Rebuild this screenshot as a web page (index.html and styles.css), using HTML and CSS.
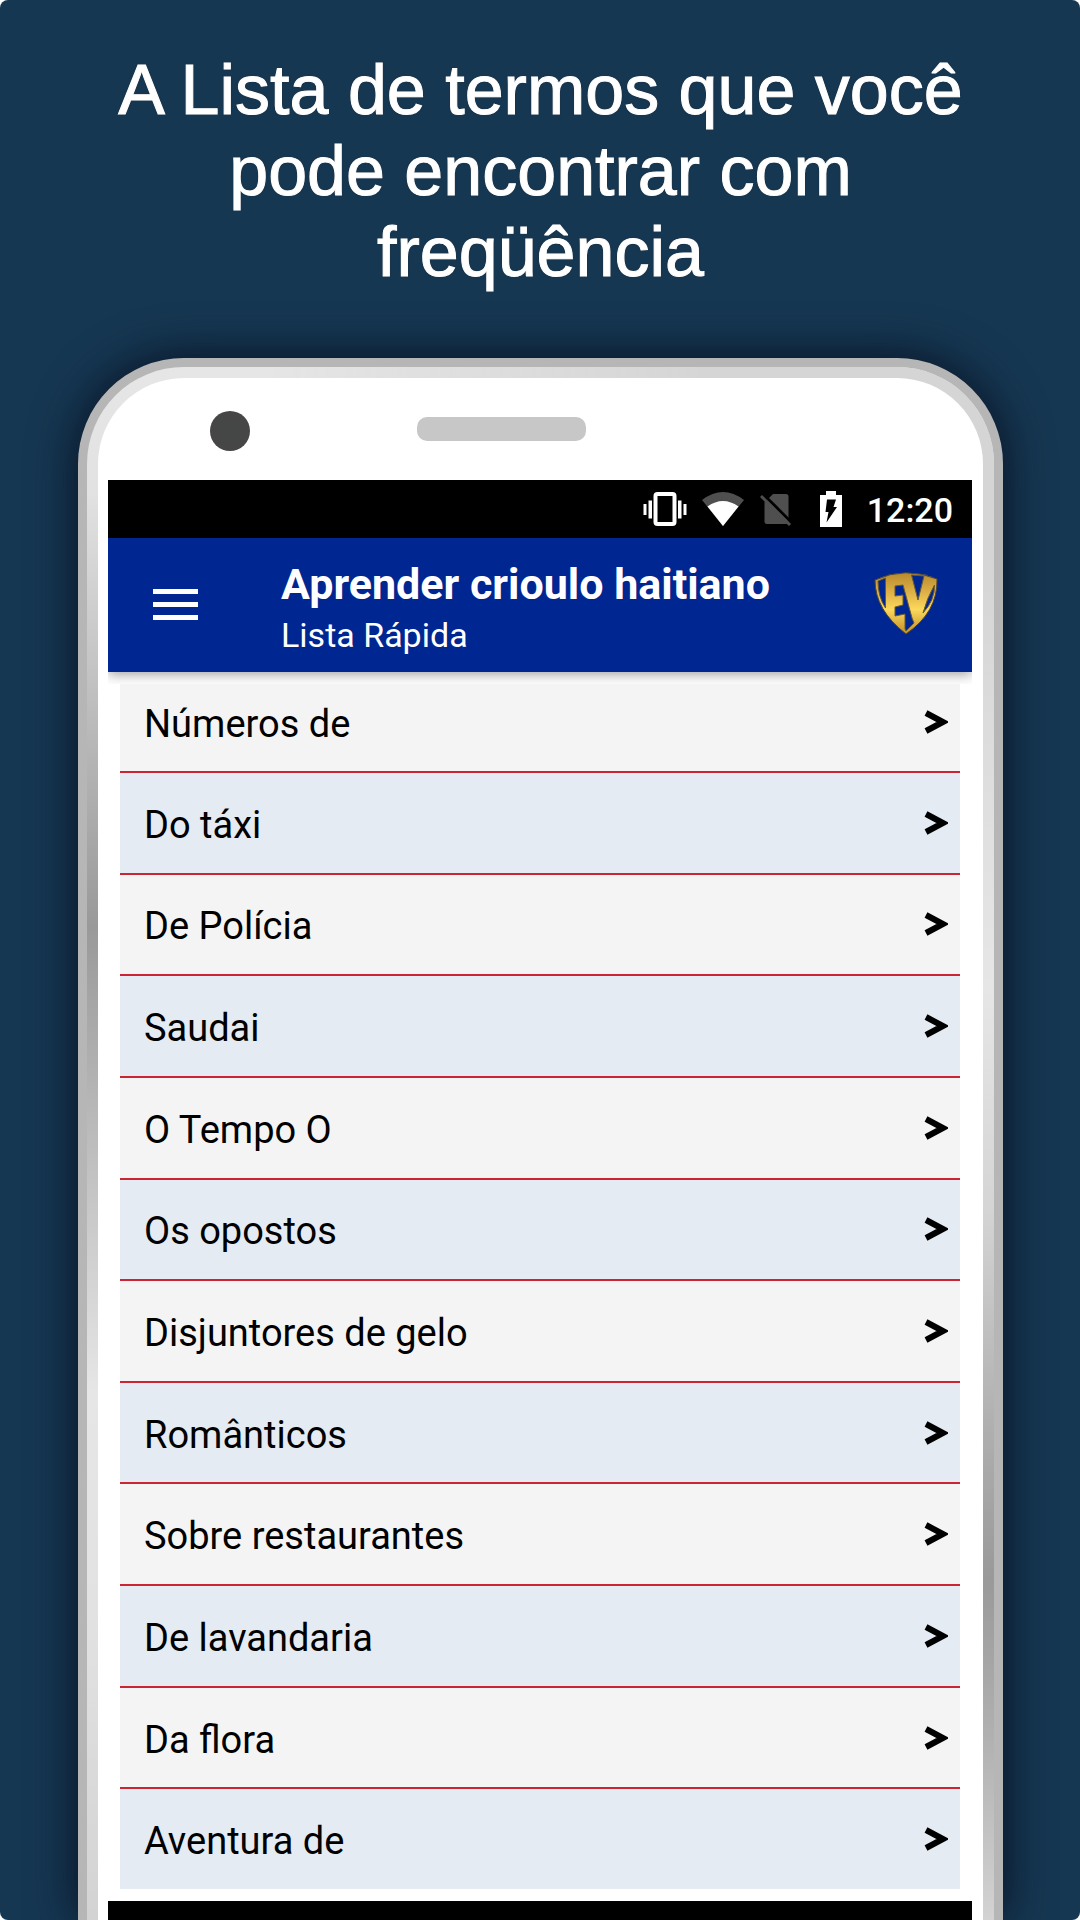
FILE: index.html
```html
<!doctype html>
<html lang="pt">
<head>
  <title>Aprender crioulo haitiano</title>
  <meta charset="UTF-8">
  <meta name="viewport" content="width=device-width, initial-scale=1">
  <link rel="stylesheet" href="styles.css">
</head>
<body>
  <div class="promo">
    <h1>A Lista de termos que você pode encontrar com freqüência</h1>
    <div class="phone">
      <div class="bezel">
        <div class="sensors">
          <span class="camera"></span>
          <span class="speaker"></span>
        </div>
        <div class="screen">
          <div class="status-bar">
            <svg class="vibrate" viewBox="0 0 44 34" width="44" height="34" fill="#fff">
              <rect x="12.5" y="2" width="19" height="30" rx="2" fill="none" stroke="#fff" stroke-width="4"/>
              <path d="M0.5 12h3v11h-3zM5.5 8.5h3.5v18h-3.5zM35 8.5h3.5v18h-3.5zM40.5 12h3v11h-3z"/>
            </svg>
            <svg class="wifi" viewBox="0 0 42 34" width="42" height="34">
              <path d="M0 8Q21-8 42 8L21 34Z" fill="#4f4f4f"/>
              <path d="M5.5 14.5Q21 3.5 36.5 14.5L21 34Z" fill="#fff"/>
            </svg>
            <svg class="no-sim" viewBox="0 0 32 34" width="32" height="34">
              <path d="M13 2h13q2.500 0 2.500 2.500v25q0 2.500-2.500 2.500h-19q-2.500 0-2.500-2.500V10.500z" fill="#4f4f4f"/>
              <path d="M3 2L32 31" stroke="#000" stroke-width="3"/>
              <path d="M1 4L30 33" stroke="#4f4f4f" stroke-width="3"/>
            </svg>
            <svg class="battery" viewBox="0 0 24 36" width="24" height="36">
              <path d="M7 0h10v4h6v32H1V4h6z" fill="#fff"/>
              <path d="M8 8.500h9L14.500 16h3.500L7.500 31.500l2-10.500H6.500z" fill="#000"/>
            </svg>
            <span class="time">12:20</span>
          </div>
          <header class="app-bar">
            <button type="button" class="menu-btn" aria-label="Menu">
              <span></span><span></span><span></span>
            </button>
            <div class="titles">
              <h2>Aprender crioulo haitiano</h2>
              <p>Lista Rápida</p>
            </div>
            <svg class="logo" viewBox="0 0 64 64" width="64" height="64">
              <defs>
                <linearGradient id="gold" x1="0" y1="0" x2="0" y2="1">
                  <stop offset="0" stop-color="#b78a2e"/>
                  <stop offset="0.3" stop-color="#dcae45"/>
                  <stop offset="0.6" stop-color="#fbd95c"/>
                  <stop offset="1" stop-color="#c08d28"/>
                </linearGradient>
              </defs>
              <path d="M1 8Q31-6 63 7Q64 40 32 62Q1 38 1 8Z" fill="url(#gold)" stroke="#4f4636" stroke-width="1"/>
              <g fill="#002692" stroke="#6b5a30" stroke-width="1">
                <path d="M4 9L11.500 6V36Q4 25 4 9Z"/>
                <path d="M21 14L29 13L38 46L40 51L32 59L31 57V42L21 44V35L29 33V23L21 24Z"/>
                <path d="M37.500 3L50 4L44 28Z"/>
                <path d="M60.500 13Q61 28 49 41Q53 26 60.500 13Z"/>
              </g>
            </svg>
          </header>
          <ul class="terms">
            <li><a href="#numeros">Números de<svg viewBox="0 0 24 24" width="24" height="24"><path d="M2 3L19 12L2 21"/></svg></a></li>
            <li><a href="#taxi">Do táxi<svg viewBox="0 0 24 24" width="24" height="24"><path d="M2 3L19 12L2 21"/></svg></a></li>
            <li><a href="#policia">De Polícia<svg viewBox="0 0 24 24" width="24" height="24"><path d="M2 3L19 12L2 21"/></svg></a></li>
            <li><a href="#saudai">Saudai<svg viewBox="0 0 24 24" width="24" height="24"><path d="M2 3L19 12L2 21"/></svg></a></li>
            <li><a href="#tempo">O Tempo O<svg viewBox="0 0 24 24" width="24" height="24"><path d="M2 3L19 12L2 21"/></svg></a></li>
            <li><a href="#opostos">Os opostos<svg viewBox="0 0 24 24" width="24" height="24"><path d="M2 3L19 12L2 21"/></svg></a></li>
            <li><a href="#disjuntores">Disjuntores de gelo<svg viewBox="0 0 24 24" width="24" height="24"><path d="M2 3L19 12L2 21"/></svg></a></li>
            <li><a href="#romanticos">Românticos<svg viewBox="0 0 24 24" width="24" height="24"><path d="M2 3L19 12L2 21"/></svg></a></li>
            <li><a href="#restaurantes">Sobre restaurantes<svg viewBox="0 0 24 24" width="24" height="24"><path d="M2 3L19 12L2 21"/></svg></a></li>
            <li><a href="#lavandaria">De lavandaria<svg viewBox="0 0 24 24" width="24" height="24"><path d="M2 3L19 12L2 21"/></svg></a></li>
            <li><a href="#flora">Da flora<svg viewBox="0 0 24 24" width="24" height="24"><path d="M2 3L19 12L2 21"/></svg></a></li>
            <li><a href="#aventura">Aventura de<svg viewBox="0 0 24 24" width="24" height="24"><path d="M2 3L19 12L2 21"/></svg></a></li>
          </ul>
          <div class="nav-bar"></div>
        </div>
      </div>
    </div>
  </div>
</body>
</html>
```
FILE: styles.css
```css
* {
  box-sizing: border-box;
}
body {
  margin: 0;
  background: #fff;
  font-family: Roboto, Arial, sans-serif;
}
.promo {
  display: flex;
  flex-direction: column;
  min-height: 100vh;
  padding: 50px 77px 0 78px;
  background: #163752;
  border-radius: 8px;
  overflow: hidden;
}
h1 {
  margin: 0 0 65px;
  padding: 0 20px;
  color: #fff;
  font-family: 'Liberation Sans', Arial, sans-serif;
  font-size: 70px;
  font-weight: 400;
  line-height: 81px;
  text-align: center;
  -webkit-text-stroke: 1px #fff;
  text-shadow: 0 0 2px #2b2b2b;
}
/* phone frame */
.phone {
  flex: 1;
  display: flex;
  padding: 9px 9px 0;
  background: #b6b6b6;
  border-radius: 106px 106px 0 0;
  box-shadow: 0 0 48px rgba(6, 12, 28, 0.9);
}
.bezel {
  flex: 1;
  display: flex;
  flex-direction: column;
  position: relative;
  padding: 11px 22px 0 21px;
  border-radius: 97px 97px 0 0;
  background: linear-gradient(180deg, #e6e6e6 0%, #e2e2e2 8%, #b5b5b5 25%, #999 36%, #b5b5b5 47%, #e6e6e6 66%, #e2e2e2 80%, #d3d3d3 100%);
  overflow: hidden;
}
.bezel::before {
  content: '';
  position: absolute;
  top: 0;
  right: 0;
  bottom: 0;
  width: 80%;
  background: linear-gradient(180deg, #d5d5d5 0%, #d5d5d5 12%, #e6e6e6 40%, #d5d5d5 54%, #b0b0b0 68%, #999 78%, #b0b0b0 88%, #d3d3d3 100%);
  mask-image: linear-gradient(90deg, transparent, #000 60%);
}
.bezel::after {
  content: '';
  position: absolute;
  top: 11px;
  right: 11px;
  bottom: 0;
  left: 11px;
  background: #fff;
  border-radius: 86px 86px 0 0;
}
.sensors,
.screen {
  position: relative;
  z-index: 1;
}
.sensors {
  display: flex;
  align-items: center;
  gap: 167px;
  height: 102px;
  padding-left: 102px;
}
.camera {
  width: 40px;
  height: 40px;
  margin-top: 4px;
  border-radius: 50%;
  background: radial-gradient(circle, #444745 12px, #464646 13px);
}
.speaker {
  width: 169px;
  height: 24px;
  border-radius: 10px;
  background: #c7c7c7;
}
.screen {
  flex: 1;
  display: flex;
  flex-direction: column;
  background: #fff;
}
.status-bar {
  display: flex;
  align-items: center;
  justify-content: flex-end;
  height: 58px;
  padding-right: 19px;
  background: #000;
  color: #fff;
}
.wifi {
  margin-left: 15px;
}
.no-sim {
  margin-left: 16px;
}
.battery {
  margin-left: 27px;
}
.time {
  margin-left: 24px;
  padding-top: 2px;
  font-size: 34px;
  font-weight: 500;
  line-height: 40px;
}
.app-bar {
  display: flex;
  align-items: center;
  height: 134px;
  padding: 0 34px 2px 45px;
  background: #002692;
  color: #fff;
  box-shadow: 0 2px 12px rgba(0, 0, 0, 0.4);
  clip-path: inset(0 0 -12px 0);
}
.menu-btn {
  display: flex;
  flex-direction: column;
  gap: 8px;
  padding: 0;
  border: none;
  background: none;
  cursor: pointer;
}
.menu-btn span {
  width: 45px;
  height: 5px;
  background: #fff;
}
.titles {
  flex: 1;
  margin-left: 83px;
  padding-top: 10px;
}
h2 {
  margin: 0;
  font-size: 43px;
  font-weight: 700;
  line-height: 52px;
}
.titles p {
  margin: 0;
  font-size: 34px;
  line-height: 50px;
}
.terms {
  flex: 1;
  display: flex;
  flex-direction: column;
  margin: 12px;
  padding: 0;
  list-style: none;
}
.terms li {
  flex: 1 1 auto;
  display: flex;
  background: #f4f4f4;
  border-bottom: 2px solid #cb2535;
}
.terms li:first-child {
  flex: none;
}
.terms li:last-child {
  border-bottom: none;
}
.terms li:nth-child(even) {
  background: #e4ebf3;
}
.terms a {
  flex: 1;
  display: flex;
  align-items: center;
  justify-content: space-between;
  padding: 28px 12px 24px 24px;
  color: #000;
  font-size: 38px;
  line-height: 46px;
  text-decoration: none;
}
.terms li:first-child a {
  padding-top: 17px;
}
.terms svg {
  margin-bottom: 4px;
  fill: none;
  stroke: #000;
  stroke-width: 6;
}
.nav-bar {
  height: 19px;
  background: #000;
}
```
